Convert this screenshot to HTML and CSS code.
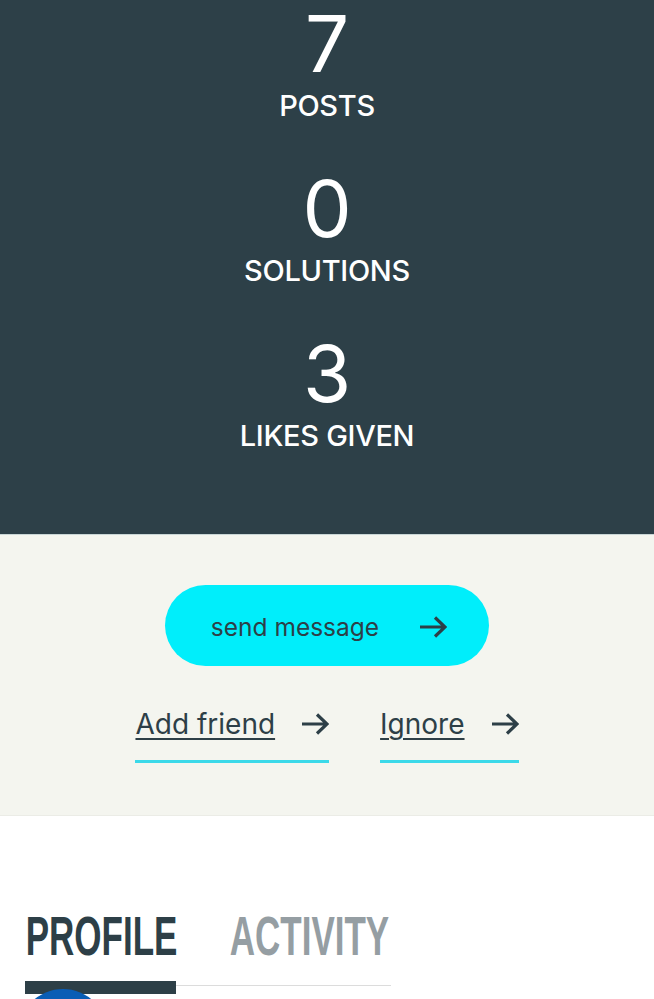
FILE: index.html
```html
<!DOCTYPE html>
<html lang="en">
<head>
    <meta charset="UTF-8">
    <meta name="viewport" content="width=device-width, initial-scale=1.0">
    <title>Member profile</title>
    <link rel="stylesheet" href="styles.css">
</head>
<body>
    <section class="stats">
        <div class="stat">
            <div class="stat-num">7</div>
            <div class="stat-label">POSTS</div>
        </div>
        <div class="stat">
            <div class="stat-num">0</div>
            <div class="stat-label">SOLUTIONS</div>
        </div>
        <div class="stat">
            <div class="stat-num">3</div>
            <div class="stat-label">LIKES GIVEN</div>
        </div>
    </section>

    <section class="actions">
        <a class="btn-message" href="#">
            <span>send message</span>
            <svg class="arrow" width="28" height="22" viewBox="0 0 28 22"><path d="M1 11H26M16 1.5L26 11L16 20.5"/></svg>
        </a>
        <div class="links">
            <a class="link" href="#">
                <span class="link-text">Add friend</span>
                <svg class="arrow" width="28" height="22" viewBox="0 0 28 22"><path d="M1 11H26M16 1.5L26 11L16 20.5"/></svg>
            </a>
            <a class="link" href="#">
                <span class="link-text">Ignore</span>
                <svg class="arrow" width="28" height="22" viewBox="0 0 28 22"><path d="M1 11H26M16 1.5L26 11L16 20.5"/></svg>
            </a>
        </div>
    </section>

    <section class="profile">
        <div class="tabs">
            <div class="tab active"><span>PROFILE</span></div>
            <div class="tab tab-activity"><span>ACTIVITY</span></div>
        </div>
        <div class="avatar"></div>
    </section>
</body>
</html>
```

FILE: styles.css
```css
body {
    margin: 0;
    font-family: Inter, 'Open Sans', sans-serif;
    color: #2d3f47;
    background: #fff;
    overflow: hidden;
}
a { color: inherit; text-decoration: none; }

.stats {
    background: #2d4048;
    color: #fff;
    padding: 4px 0 80px;
    display: flex;
    flex-direction: column;
    align-items: center;
    gap: 45px;
    border-bottom: 1px solid #c9d6d6;
}
.stat { text-align: center; }
.stat-num {
    font-size: 78px;
    line-height: 80px;
    font-weight: 400;
}
.stat-label {
    margin-top: 4px;
    font-size: 29px;
    line-height: 36px;
    font-weight: 500;
    letter-spacing: -0.3px;
}

.actions {
    background: #f4f5ef;
    padding: 50px 0 52px;
    display: flex;
    flex-direction: column;
    align-items: center;
    border-bottom: 1px solid #ebece6;
}
.btn-message {
    width: 324px;
    height: 81px;
    border-radius: 41px;
    background: #00eefb;
    display: flex;
    align-items: center;
    justify-content: center;
    gap: 40px;
    font-size: 24.5px;
    padding-left: 4px;
    padding-top: 3px;
    box-sizing: border-box;
}
.arrow {
    display: block;
    fill: none;
    stroke: #2d3f47;
    stroke-width: 3.2;
}
.links {
    margin-top: 38px;
    display: flex;
    gap: 51px;
}
.link {
    display: flex;
    align-items: center;
    gap: 26px;
    padding-bottom: 16px;
    border-bottom: 3px solid #3bd9e9;
    font-size: 28px;
    line-height: 40px;
}
.link-text {
    text-decoration: underline;
    text-decoration-thickness: 2px;
    text-underline-offset: 4px;
}

.profile {
    padding: 92px 0 0 25px;
}
.tabs {
    display: flex;
    gap: 53px;
    width: 366px;
    border-bottom: 1px solid #dcdcdc;
    padding-bottom: 21px;
}
.tab {
    position: relative;
    width: 151px;
    height: 56px;
    font-family: 'Liberation Sans Narrow', 'Liberation Sans', sans-serif;
    font-weight: 700;
    font-size: 56px;
    line-height: 56px;
    color: #959ea3;
    white-space: nowrap;
}
.tab span {
    display: inline-block;
    transform: scaleX(0.625);
    transform-origin: 2px 0;
}
.tab-activity { width: 162px; }
.tab.active { color: #2d3f47; }
.tab.active::after {
    content: "";
    position: absolute;
    left: 0;
    right: 0;
    bottom: -30px;
    height: 13px;
    background: #2d3f47;
}
.avatar {
    position: relative;
    margin: 3px 0 0 -7px;
    width: 90px;
    height: 90px;
    border-radius: 50%;
    background: #0a5db5;
}
```
